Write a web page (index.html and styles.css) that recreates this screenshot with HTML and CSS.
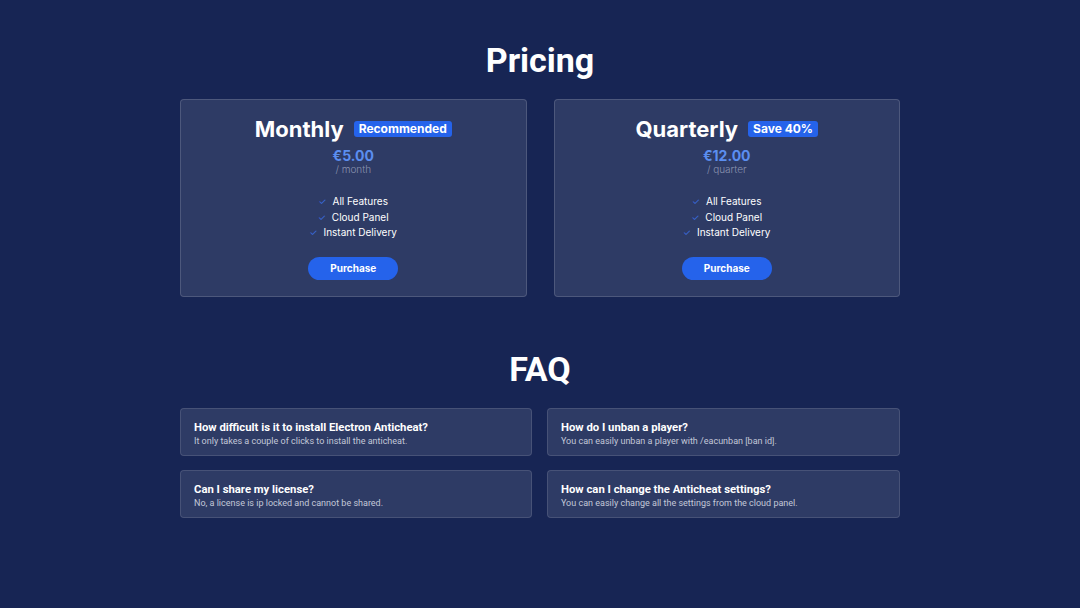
FILE: index.html
```html
<!DOCTYPE html>
<html lang="en">
<head>
    <meta charset="UTF-8">
    <meta name="viewport" content="width=device-width, initial-scale=1.0">
    <title>Electron Anticheat - Pricing</title>
    <link rel="stylesheet" href="styles.css">
</head>
<body>
    <main class="page">
        <section class="pricing">
            <h1 class="section-title">Pricing</h1>
            <div class="plans">
                <div class="plan">
                    <div class="plan-head">
                        <h2>Monthly</h2>
                        <span class="badge">Recommended</span>
                    </div>
                    <div class="price">€5.00</div>
                    <div class="period">/ month</div>
                    <ul class="features">
                        <li><span class="check">✓</span>All Features</li>
                        <li><span class="check">✓</span>Cloud Panel</li>
                        <li><span class="check">✓</span>Instant Delivery</li>
                    </ul>
                    <button class="buy">Purchase</button>
                </div>
                <div class="plan">
                    <div class="plan-head">
                        <h2>Quarterly</h2>
                        <span class="badge">Save 40%</span>
                    </div>
                    <div class="price">€12.00</div>
                    <div class="period">/ quarter</div>
                    <ul class="features">
                        <li><span class="check">✓</span>All Features</li>
                        <li><span class="check">✓</span>Cloud Panel</li>
                        <li><span class="check">✓</span>Instant Delivery</li>
                    </ul>
                    <button class="buy">Purchase</button>
                </div>
            </div>
        </section>

        <section class="faq">
            <h1 class="section-title">FAQ</h1>
            <div class="questions">
                <div class="question">
                    <h3>How difficult is it to install Electron Anticheat?</h3>
                    <p>It only takes a couple of clicks to install the anticheat.</p>
                </div>
                <div class="question">
                    <h3>How do I unban a player?</h3>
                    <p>You can easily unban a player with /eacunban [ban id].</p>
                </div>
                <div class="question">
                    <h3>Can I share my license?</h3>
                    <p>No, a license is ip locked and cannot be shared.</p>
                </div>
                <div class="question">
                    <h3>How can I change the Anticheat settings?</h3>
                    <p>You can easily change all the settings from the cloud panel.</p>
                </div>
            </div>
        </section>
    </main>
</body>
</html>
```

FILE: styles.css
```css
body {
    margin: 0;
    min-height: 100vh;
    background-color: #172554;
    font-family: Roboto, "Liberation Sans", sans-serif;
    color: white;
}
.page {
    width: 720px;
    margin: 0 auto;
    padding-top: 39px;
}
.section-title {
    margin: 0;
    text-align: center;
    font-size: 34px;
    font-weight: 700;
    line-height: 42px;
}
.plans {
    display: grid;
    grid-template-columns: 1fr 1fr;
    gap: 27px;
    margin-top: 18px;
}
.plan {
    display: flex;
    flex-direction: column;
    align-items: center;
    height: 198px;
    box-sizing: border-box;
    padding-top: 15px;
    background-color: rgba(255, 255, 255, 0.1);
    border: 1px solid rgba(255, 255, 255, 0.15);
    border-radius: 4px;
    font-family: Inter, "Open Sans", sans-serif;
}
.plan-head {
    display: flex;
    align-items: center;
    gap: 10px;
}
.plan-head h2 {
    margin: 0;
    font-size: 22px;
    font-weight: 700;
    line-height: 28px;
}
.badge {
    background-color: #2563eb;
    border-radius: 3px;
    padding: 1px 5px;
    font-size: 12px;
    font-weight: 700;
    line-height: 14px;
}
.price {
    margin-top: 5px;
    color: #5b8ef0;
    font-size: 14px;
    font-weight: 700;
    line-height: 16px;
}
.period {
    margin-top: -1px;
    color: #8a93b0;
    font-size: 10px;
    font-weight: 300;
    line-height: 12px;
}
.features {
    list-style: none;
    margin: 19px 0 0;
    padding: 0;
    font-size: 10px;
    line-height: 15.5px;
    text-align: center;
}
.check {
    color: #3b6fe0;
    margin-right: 6px;
    font-size: 9px;
}
.buy {
    margin-top: 16px;
    width: 90px;
    height: 23px;
    border: none;
    border-radius: 12px;
    background-color: #2563eb;
    color: white;
    font-family: inherit;
    font-size: 10px;
    font-weight: 700;
    cursor: pointer;
}
.faq {
    margin-top: 51px;
}
.questions {
    display: grid;
    grid-template-columns: 352px 353px;
    justify-content: space-between;
    row-gap: 14px;
    margin-top: 18px;
}
.question {
    height: 48px;
    box-sizing: border-box;
    padding: 11px 13px;
    background-color: rgba(255, 255, 255, 0.1);
    border: 1px solid rgba(255, 255, 255, 0.12);
    border-radius: 4px;
}
.question h3 {
    margin: 0;
    font-size: 11.3px;
    font-weight: 700;
    line-height: 15px;
}
.question p {
    margin: 0;
    color: #c3c8d8;
    font-size: 9px;
    line-height: 13px;
}
```
